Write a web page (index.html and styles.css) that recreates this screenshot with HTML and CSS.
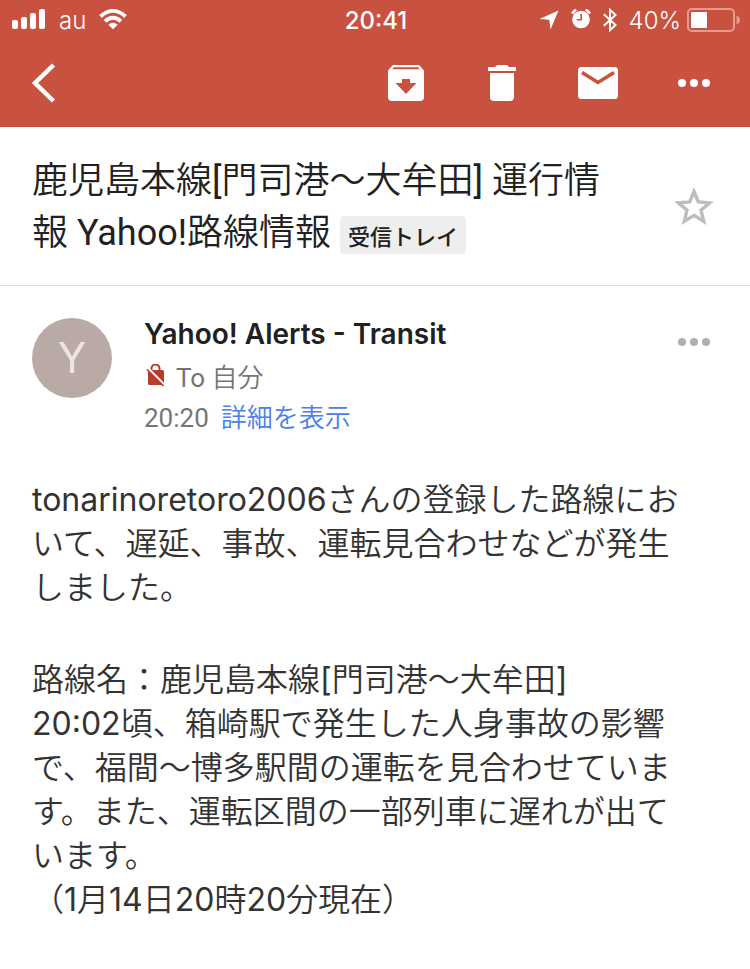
FILE: index.html
```html
<!DOCTYPE html>
<html lang="ja">
<head>
    <meta charset="UTF-8">
    <meta name="viewport" content="width=device-width, initial-scale=1.0">
    <title>Mail</title>
    <link rel="stylesheet" href="styles.css">
</head>
<body>
    <header>
        <div class="status-bar">
            <div class="status-left">
                <svg width="34" height="22" viewBox="0 0 34 22" fill="#fff">
                    <rect x="0" y="11" width="6" height="9" rx="2"/>
                    <rect x="9" y="8" width="6" height="12" rx="2"/>
                    <rect x="18" y="4" width="6" height="16" rx="2"/>
                    <rect x="27" y="0" width="6" height="20" rx="2"/>
                </svg>
                <span>au</span>
                <svg width="28" height="22" viewBox="0 0 28 22">
                    <path d="M1.500 7.500Q14-3.800 26.500 7.500M6 12.200Q14 5.200 22 12.200" fill="none" stroke="#fff" stroke-width="3.800"/>
                    <path d="M9.300 15.800Q14 11.800 18.700 15.800L14 20.300Z" fill="#fff"/>
                </svg>
            </div>
            <span class="clock">20:41</span>
            <div class="status-right">
                <svg width="20" height="20" viewBox="0 0 20 20" fill="#fff">
                    <path d="M19.500 0.500L11.500 19.500L10.300 9.800L0.500 9Z"/>
                </svg>
                <svg width="20" height="22" viewBox="0 0 20 22">
                    <circle cx="10" cy="10.500" r="8.800" fill="#fff"/>
                    <path d="M1.200 4.600A7 7 0 0 1 5.400 0.800M14.600 0.800A7 7 0 0 1 18.800 4.600" fill="none" stroke="#fff" stroke-width="2.600"/>
                    <path d="M10.200 5V10.800H5.800" fill="none" stroke="#c9513f" stroke-width="1.600"/>
                </svg>
                <svg width="14" height="24" viewBox="0 0 14 24">
                    <path d="M0.800 6.200L12.600 17L7 22.200V1.800L12.600 7L0.800 17.800" fill="none" stroke="#fff" stroke-width="2"/>
                </svg>
                <span class="percent">40%</span>
                <svg width="53" height="24" viewBox="0 0 53 24">
                    <rect x="1" y="1" width="46" height="22" rx="4" fill="none" stroke="#e49b90" stroke-width="2"/>
                    <rect x="4" y="4" width="16" height="16" rx="1" fill="#fff"/>
                    <path d="M49.500 7.500Q53 9 53 12T49.500 16.500Z" fill="#e49b90"/>
                </svg>
            </div>
        </div>
        <nav class="toolbar">
            <button class="back" aria-label="戻る">
                <svg width="24" height="40" viewBox="0 0 24 40">
                    <path d="M21.500 2L3 20L21.500 38" fill="none" stroke="#fff" stroke-width="4.500"/>
                </svg>
            </button>
            <button aria-label="アーカイブ">
                <svg width="36" height="36" viewBox="0 0 36 36">
                    <path d="M5 0H31L36 5.500V32Q36 36 32 36H4Q0 36 0 32V5.500Z" fill="#fff"/>
                    <path d="M6 2.200H30L32 4.200H4Z" fill="#c9513f"/>
                    <path d="M14 14H22V18H28.500L18 29L7.500 18H14Z" fill="#c9513f"/>
                </svg>
            </button>
            <button aria-label="削除">
                <svg width="28" height="36" viewBox="0 0 28 36" fill="#fff">
                    <path d="M0 2H7L9 0H19L21 2H28V6H0Z"/>
                    <path d="M2 8H26V32Q26 36 22 36H6Q2 36 2 32Z"/>
                </svg>
            </button>
            <button aria-label="未読にする">
                <svg width="40" height="32" viewBox="0 0 40 32">
                    <rect width="40" height="32" rx="3.500" fill="#fff"/>
                    <path d="M4 5.500L20 15.500L36 5.500" fill="none" stroke="#c9513f" stroke-width="3.600"/>
                </svg>
            </button>
            <button aria-label="その他">
                <svg width="32" height="8" viewBox="0 0 32 8" fill="#fff">
                    <circle cx="4" cy="4" r="4"/>
                    <circle cx="16" cy="4" r="4"/>
                    <circle cx="28" cy="4" r="4"/>
                </svg>
            </button>
        </nav>
    </header>

    <div class="subject">
        <h1>鹿児島本線[門司港〜大牟田] 運行情<br>報 Yahoo!路線情報 <span class="label">受信トレイ</span></h1>
        <button aria-label="スター">
            <svg width="40" height="38" viewBox="0 0 40 38">
                <path d="M20 3.500L24.300 14L35.600 14.900L27 22.200L29.700 33.300L20 27.400L10.300 33.300L13 22.200L4.400 14.900L15.700 14Z" fill="none" stroke="#bdbdbd" stroke-width="3.400"/>
            </svg>
        </button>
    </div>

    <main>
        <div class="sender">
            <div class="avatar">Y</div>
            <div class="info">
                <h2>Yahoo! Alerts - Transit</h2>
                <p>
                    <svg width="20" height="28" viewBox="0 0 20 28">
                        <path d="M7.500 8V4.500A4 4 0 0 1 15.500 4.500V8" fill="none" stroke="#b93b2c" stroke-width="2"/>
                        <rect x="4" y="6" width="16" height="15" rx="1.500" fill="#b93b2c"/>
                        <path d="M3 3.500L20 20.500" stroke="#fff" stroke-width="2.600"/>
                        <path d="M3 5.500L19.500 22" stroke="#b93b2c" stroke-width="1.600"/>
                    </svg>
                    To 自分
                </p>
                <p>20:20 <a href="#">詳細を表示</a></p>
            </div>
            <button aria-label="メニュー">
                <svg width="32" height="8" viewBox="0 0 32 8" fill="#b0b0b0">
                    <circle cx="4" cy="4" r="4"/>
                    <circle cx="16" cy="4" r="4"/>
                    <circle cx="28" cy="4" r="4"/>
                </svg>
            </button>
        </div>

        <div class="message">
            <p>tonarinoretoro2006さんの登録した路線にお<br>いて、遅延、事故、運転見合わせなどが発生<br>しました。</p>
            <p>路線名：鹿児島本線[門司港〜大牟田]<br>20:02頃、箱崎駅で発生した人身事故の影響<br>で、福間〜博多駅間の運転を見合わせていま<br>す。また、運転区間の一部列車に遅れが出て<br>います。<br>（1月14日20時20分現在）</p>
        </div>
    </main>
</body>
</html>
```

FILE: styles.css
```css
body {
    font-family: Inter, "Noto Sans CJK JP DemiLight", "Noto Sans CJK JP", sans-serif;
    font-weight: 400;
    margin: 0;
    background-color: #fff;
    color: #333;
}

h1, h2, p {
    margin: 0;
}

button {
    display: flex;
    align-items: center;
    justify-content: center;
    padding: 0;
    border: none;
    background: none;
    cursor: pointer;
}

svg {
    display: block;
    flex-shrink: 0;
}

header {
    background-color: #c9513f;
    color: #fff;
    padding-bottom: 9px;
}

.status-bar {
    display: grid;
    grid-template-columns: 1fr auto 1fr;
    align-items: center;
    height: 40px;
    padding: 0 10px 0 12px;
    font-size: 24px;
    font-weight: 300;
}

.status-left, .status-right {
    display: flex;
    align-items: center;
    gap: 13px;
}

.status-right {
    gap: 12px;
    justify-content: flex-end;
}

.clock {
    font-weight: 500;
}

.percent {
    margin-right: -6px;
}

.toolbar {
    display: flex;
    align-items: center;
    height: 70px;
    padding: 0 8px 0 32px;
    margin-top: 8px;
}

.toolbar button {
    width: 96px;
    height: 56px;
}

.toolbar .back {
    justify-content: flex-start;
    margin-right: auto;
}

.subject {
    display: flex;
    align-items: center;
    justify-content: space-between;
    padding: 28px 36px 26px 32px;
    border-bottom: 1px solid #dcdcdc;
}

.subject h1 {
    font-family: Roboto, "Noto Sans CJK JP DemiLight", "Noto Sans CJK JP", sans-serif;
    font-size: 36px;
    line-height: 52px;
    font-weight: 400;
    color: #212121;
}

.label {
    display: inline-block;
    vertical-align: middle;
    padding: 0 8px;
    border-radius: 4px;
    background-color: #eee;
    font-family: "Noto Sans CJK JP", sans-serif;
    font-size: 22px;
    line-height: 38px;
    font-weight: 500;
}

main {
    padding: 28px 40px 48px 32px;
}

.sender {
    display: flex;
    align-items: flex-start;
}

.sender button {
    height: 56px;
    margin-left: auto;
}

.avatar {
    width: 80px;
    height: 80px;
    margin: 4px 32px 0 0;
    border-radius: 50%;
    background-color: #b9aaa5;
    color: #efe6e4;
    font-size: 42px;
    line-height: 80px;
    text-align: center;
}

.info h2 {
    margin-bottom: 4px;
    font-size: 28px;
    line-height: 40px;
    font-weight: 600;
    color: #212121;
}

.info p {
    display: flex;
    align-items: center;
    gap: 12px;
    font-family: Roboto, "Noto Sans CJK JP DemiLight", "Noto Sans CJK JP", sans-serif;
    font-size: 26px;
    line-height: 40px;
    color: #757575;
}

.info a {
    color: #4a80e8;
    text-decoration: none;
}

.message {
    margin-top: 40px;
    font-size: 32px;
    line-height: 44px;
}

.message p + p {
    margin-top: 48px;
}
```
